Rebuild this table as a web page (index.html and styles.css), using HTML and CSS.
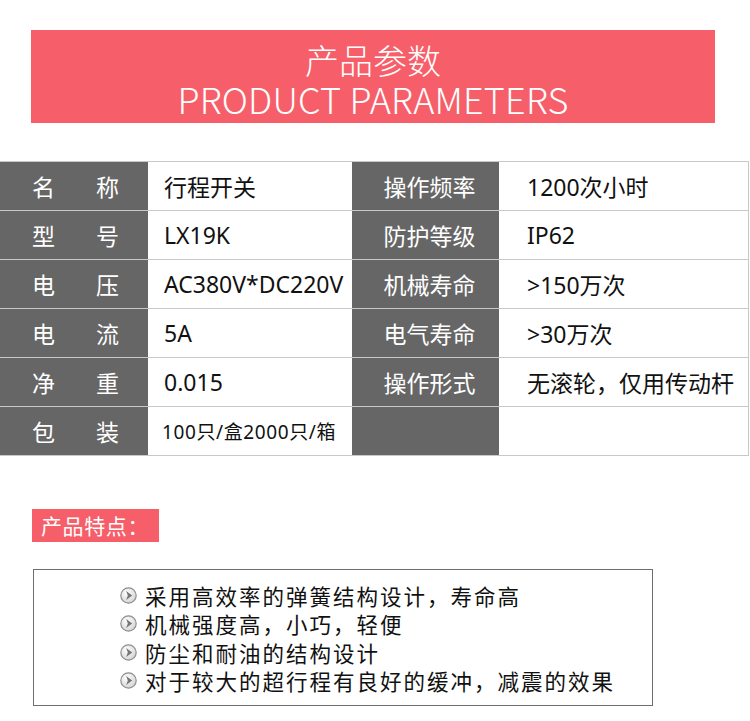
FILE: index.html
```html
<!DOCTYPE html>
<html lang="zh-CN">
<head>
<meta charset="utf-8">
<title>产品参数</title>
<link rel="stylesheet" href="styles.css">
</head>
<body>
<div class="page">
  <header class="banner">
    <div class="banner-cn">产品参数</div>
    <div class="banner-en">PRODUCT PARAMETERS</div>
  </header>

  <div class="spec">
    <div class="k k2"><span>名</span><span>称</span></div>
    <div class="v">行程开关</div>
    <div class="k k4">操作频率</div>
    <div class="v v4">1200次小时</div>

    <div class="k k2"><span>型</span><span>号</span></div>
    <div class="v">LX19K</div>
    <div class="k k4">防护等级</div>
    <div class="v v4">IP62</div>

    <div class="k k2"><span>电</span><span>压</span></div>
    <div class="v">AC380V*DC220V</div>
    <div class="k k4">机械寿命</div>
    <div class="v v4">&gt;150万次</div>

    <div class="k k2"><span>电</span><span>流</span></div>
    <div class="v">5A</div>
    <div class="k k4">电气寿命</div>
    <div class="v v4">&gt;30万次</div>

    <div class="k k2"><span>净</span><span>重</span></div>
    <div class="v">0.015</div>
    <div class="k k4">操作形式</div>
    <div class="v v4">无滚轮，仅用传动杆</div>

    <div class="k k2"><span>包</span><span>装</span></div>
    <div class="v v-small">100只/盒2000只/箱</div>
    <div class="k k4"></div>
    <div class="v v4"></div>
  </div>

  <div class="badge">产品特点：</div>

  <svg class="defs" width="0" height="0" aria-hidden="true">
    <defs>
      <radialGradient id="g" cx="0.4" cy="0.35" r="0.75">
        <stop offset="0" stop-color="#ffffff"/>
        <stop offset="1" stop-color="#cfcfcf"/>
      </radialGradient>
    </defs>
  </svg>

  <ul class="features">
    <li><svg class="bullet" viewBox="0 0 17 17"><circle cx="8.5" cy="8.5" r="7.7" fill="url(#g)" stroke="#8f8f8f" stroke-width="1.2"/><path d="M6.2 4 L12.2 8.5 L6.2 13 L7.8 8.5 Z" fill="#767676"/></svg>采用高效率的弹簧结构设计，寿命高</li>
    <li><svg class="bullet" viewBox="0 0 17 17"><circle cx="8.5" cy="8.5" r="7.7" fill="url(#g)" stroke="#8f8f8f" stroke-width="1.2"/><path d="M6.2 4 L12.2 8.5 L6.2 13 L7.8 8.5 Z" fill="#767676"/></svg>机械强度高，小巧，轻便</li>
    <li><svg class="bullet" viewBox="0 0 17 17"><circle cx="8.5" cy="8.5" r="7.7" fill="url(#g)" stroke="#8f8f8f" stroke-width="1.2"/><path d="M6.2 4 L12.2 8.5 L6.2 13 L7.8 8.5 Z" fill="#767676"/></svg>防尘和耐油的结构设计</li>
    <li><svg class="bullet" viewBox="0 0 17 17"><circle cx="8.5" cy="8.5" r="7.7" fill="url(#g)" stroke="#8f8f8f" stroke-width="1.2"/><path d="M6.2 4 L12.2 8.5 L6.2 13 L7.8 8.5 Z" fill="#767676"/></svg>对于较大的超行程有良好的缓冲，减震的效果</li>
  </ul>
</div>
</body>
</html>
```

FILE: styles.css
```css
* { box-sizing: border-box; }

html, body {
  margin: 0;
  padding: 0;
  background: #ffffff;
}

body {
  font-family: "Noto Sans", "Noto Sans CJK SC", sans-serif;
  color: #111111;
}

.page {
  width: 750px;
  padding-top: 30px;
}

.banner {
  margin-left: 31px;
  width: 684px;
  height: 93px;
  background: #f65f6a;
  color: #ffffff;
  text-align: center;
  padding-top: 11px;
}

.banner-cn {
  font-family: "Noto Sans CJK SC", sans-serif;
  font-weight: 300;
  font-size: 34px;
  line-height: 38px;
}

.banner-en {
  font-family: "Noto Sans CJK SC", "Lato", sans-serif;
  font-weight: 300;
  font-size: 36px;
  line-height: 38px;
  letter-spacing: 0.2px;
}

.spec {
  margin-top: 38px;
  display: grid;
  grid-template-columns: 148px 204px 147px 250px;
  grid-auto-rows: 49px;
  border-bottom: 1px solid #c8c8c8;
  width: 749px;
}

.spec > div {
  border-top: 1px solid #c8c8c8;
  display: flex;
  align-items: center;
  font-size: 23px;
  white-space: nowrap;
}

.k {
  background: #666666;
  color: #ffffff;
  font-family: "Noto Sans CJK SC", sans-serif;
}

.k2 {
  justify-content: space-between;
  padding: 0 29px 0 32px;
}

.k4 {
  justify-content: center;
  padding-left: 8px;
}

.v {
  background: #ffffff;
  padding-left: 16px;
}

.v4 {
  padding-left: 28px;
  border-right: 1px solid #c8c8c8;
}

.spec > .v-small {
  font-size: 19px;
  padding-left: 14px;
  letter-spacing: 0.6px;
}

.defs {
  position: absolute;
  width: 0;
  height: 0;
}

.badge {
  margin: 53px 0 0 32px;
  width: 127px;
  height: 33px;
  background: #f65f6a;
  color: #ffffff;
  font-family: "Noto Sans CJK SC", sans-serif;
  font-size: 21px;
  line-height: 33px;
  padding-left: 9px;
  letter-spacing: 0.6px;
  white-space: nowrap;
}

.features {
  list-style: none;
  margin: 27px 0 0 33px;
  width: 620px;
  height: 137px;
  border: 1px solid #6e6e6e;
  padding: 11px 0 0 86px;
  font-family: "Noto Sans CJK SC", sans-serif;
  font-size: 21.5px;
  letter-spacing: 2px;
  color: #111111;
}

.features li {
  display: flex;
  align-items: center;
  height: 28.5px;
}

.bullet {
  width: 17px;
  height: 17px;
  min-width: 17px;
  margin-right: 8px;
  flex: 0 0 17px;
}
```
